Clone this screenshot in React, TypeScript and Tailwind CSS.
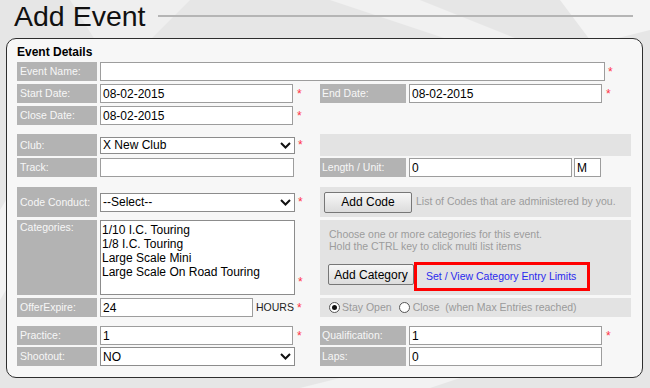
import clsx from 'clsx';
import type { ReactNode } from 'react';

function FieldLabel({ text, right, top }: { text: string; right?: boolean; top?: boolean }) {
    return (
        <div
            className={clsx(
                'flex shrink-0 self-stretch bg-[#b3b3b3] text-[10.5px] leading-[13px] text-[#f7f7f7]',
                right ? 'w-[86px] pl-[2px]' : 'w-[80px] pl-[3px]',
                top ? 'items-start pt-[1px]' : 'items-center'
            )}
        >
            {text}
        </div>
    );
}

function TextBox({ value, className }: { value?: string; className: string }) {
    return (
        <div
            className={clsx(
                'flex h-[19px] shrink-0 items-center border border-[#9d9d9d] bg-white px-[2px] text-[12px] text-black',
                className
            )}
        >
            {value}
        </div>
    );
}

function SelectBox({ value, className }: { value: string; className: string }) {
    return (
        <div
            className={clsx(
                'flex shrink-0 items-center justify-between border border-[#8c8c8c] bg-white pl-[2px] pr-[3px] text-[12px] text-black',
                className
            )}
        >
            <span>{value}</span>
            <svg width="11" height="7" viewBox="0 0 11 7" fill="none">
                <polyline points="1,1 5.5,5.5 10,1" stroke="#111" strokeWidth="2" />
            </svg>
        </div>
    );
}

function Req({ className }: { className?: string }) {
    return <span className={clsx('ml-[3px] text-[12px] leading-none text-[#ff3347]', className)}>*</span>;
}

function Button({ children, className }: { children: ReactNode; className: string }) {
    return (
        <div
            className={clsx(
                'flex shrink-0 items-center justify-center rounded-[2px] border border-[#777] bg-linear-to-b from-[#f7f7f7] to-[#dcdcdc] text-[12px] text-black',
                className
            )}
        >
            {children}
        </div>
    );
}

function Radio({ checked }: { checked?: boolean }) {
    return (
        <span className="flex h-[11px] w-[11px] items-center justify-center rounded-full border border-[#555] bg-white">
            {checked && <span className="h-[5px] w-[5px] rounded-full bg-[#111]" />}
        </span>
    );
}

export default function App() {
    return (
        <div className="relative h-[388px] w-[650px] overflow-hidden bg-[#e6e6e6] font-['Liberation_Sans',Arial,sans-serif]">
            {/* faint chequered-flag backdrop */}
            <svg className="absolute inset-0" width="650" height="388" viewBox="0 0 650 388">
                <polygon points="70,0 190,0 150,40 95,40" fill="#efefef" />
                <polygon points="330,0 420,0 520,40 450,40" fill="#f1f1f1" />
                <polygon points="560,0 650,0 650,30 610,40 590,40" fill="#f4f4f4" />
                <polygon points="0,210 6,200 6,290 0,300" fill="#f2f2f2" />
                <polygon points="300,388 340,378 460,378 430,388" fill="#f2f2f2" />
            </svg>

            <div className="relative flex h-[38px] items-start">
                <div className="flex h-[32px] w-full items-center">
                    <h1 className="pl-[14px] text-[28.5px] leading-[32px] text-[#111]">Add Event</h1>
                    <div className="ml-[12px] mr-[17px] h-[2px] flex-1 bg-[#b5b5b5]" />
                </div>
            </div>

            <div className="relative ml-[6px] flex w-[637px] flex-col rounded-[10px] border border-[#2e2e2e] bg-[#f7f7f7] pb-[11px] pl-[10px] pt-[6px]">
                <div className="text-[12px] font-bold leading-[14px] text-black">Event Details</div>

                <div className="mt-[3px] flex h-[19px] items-center">
                    <FieldLabel text="Event Name:" />
                    <TextBox className="ml-[3px] w-[505px]" />
                    <Req />
                </div>

                <div className="mt-[3px] flex h-[19px]">
                    <div className="flex w-[303px] items-center">
                        <FieldLabel text="Start Date:" />
                        <TextBox value="08-02-2015" className="ml-[3px] w-[193px]" />
                        <Req className="ml-[4px]" />
                    </div>
                    <div className="flex w-[311px] items-center">
                        <FieldLabel text="End Date:" right />
                        <TextBox value="08-02-2015" className="ml-[3px] w-[193px]" />
                        <Req className="ml-[4px]" />
                    </div>
                </div>

                <div className="mt-[3px] flex h-[19px]">
                    <div className="flex w-[303px] items-center">
                        <FieldLabel text="Close Date:" />
                        <TextBox value="08-02-2015" className="ml-[3px] w-[193px]" />
                        <Req className="ml-[4px]" />
                    </div>
                </div>

                <div className="mt-[9px] flex h-[22px]">
                    <div className="flex w-[303px] items-center">
                        <FieldLabel text="Club:" />
                        <SelectBox value="X New Club" className="ml-[3px] h-[17px] w-[195px]" />
                        <Req />
                    </div>
                    <div className="w-[311px] bg-[#e3e3e3]" />
                </div>

                <div className="mt-[2px] flex h-[19px]">
                    <div className="flex w-[303px] items-center">
                        <FieldLabel text="Track:" />
                        <TextBox className="ml-[3px] w-[194px]" />
                    </div>
                    <div className="flex w-[311px] items-center">
                        <FieldLabel text="Length / Unit:" right />
                        <TextBox value="0" className="ml-[3px] w-[163px]" />
                        <TextBox value="M" className="ml-[2px] w-[27px]" />
                    </div>
                </div>

                <div className="mt-[10px] flex h-[30px]">
                    <div className="flex w-[303px] items-center">
                        <FieldLabel text="Code Conduct:" />
                        <SelectBox value="--Select--" className="ml-[3px] h-[19px] w-[195px]" />
                        <Req />
                    </div>
                    <div className="flex w-[311px] items-center bg-[#e3e3e3] pl-[4px]">
                        <Button className="h-[21px] w-[88px]">Add Code</Button>
                        <span className="ml-[4px] text-[10.5px] text-[#9c9c9c]">List of Codes that are administered by you.</span>
                    </div>
                </div>

                <div className="mt-[3px] flex h-[75px]">
                    <div className="flex w-[303px]">
                        <FieldLabel text="Categories:" top />
                        <div className="ml-[3px] flex w-[195px] shrink-0 flex-col border border-[#8c8c8c] bg-white px-[1px] pt-[2px] text-[12px] leading-[14px] text-black">
                            <span>1/10 I.C. Touring</span>
                            <span>1/8 I.C. Touring</span>
                            <span>Large Scale Mini</span>
                            <span>Large Scale On Road Touring</span>
                        </div>
                        <Req className="mb-[7px] self-end" />
                    </div>
                    <div className="flex w-[311px] flex-col bg-[#e3e3e3] pl-[8px] pt-[8px]">
                        <div className="pl-[1px] text-[10.5px] leading-[12px] text-[#9c9c9c]">
                            <div>Choose one or more categories for this event.</div>
                            <div>Hold the CTRL key to click multi list items</div>
                        </div>
                        <div className="mt-[10px] flex items-start">
                            <Button className="mt-[2px] h-[21px] w-[86px]">Add Category</Button>
                            <div className="flex h-[29px] w-[176px] items-center border-[3px] border-[#f00] pl-[9px] text-[10.5px] text-[#2a2aee]">
                                Set / View Category Entry Limits
                            </div>
                        </div>
                    </div>
                </div>

                <div className="mt-[3px] flex h-[19px]">
                    <div className="flex w-[303px] items-center">
                        <FieldLabel text="OfferExpire:" />
                        <TextBox value="24" className="ml-[3px] w-[153px]" />
                        <span className="ml-[3px] text-[10.5px] text-[#222]">HOURS</span>
                        <Req className="ml-[2px]" />
                    </div>
                    <div className="flex w-[311px] items-center bg-[#e3e3e3] pl-[9px] text-[10.5px] text-[#9a9a9a]">
                        <Radio checked />
                        <span className="ml-[2px]">Stay Open</span>
                        <span className="ml-[7px]">
                            <Radio />
                        </span>
                        <span className="ml-[3px] whitespace-pre">Close  (when Max Entries reached)</span>
                    </div>
                </div>

                <div className="mt-[9px] flex h-[19px]">
                    <div className="flex w-[303px] items-center">
                        <FieldLabel text="Practice:" />
                        <TextBox value="1" className="ml-[3px] w-[193px]" />
                        <Req className="ml-[4px]" />
                    </div>
                    <div className="flex w-[311px] items-center">
                        <FieldLabel text="Qualification:" right />
                        <TextBox value="1" className="ml-[3px] w-[193px]" />
                        <Req className="ml-[4px]" />
                    </div>
                </div>

                <div className="mt-[2px] flex h-[19px]">
                    <div className="flex w-[303px] items-center">
                        <FieldLabel text="Shootout:" />
                        <SelectBox value="NO" className="ml-[3px] h-[19px] w-[195px]" />
                    </div>
                    <div className="flex w-[311px] items-center">
                        <FieldLabel text="Laps:" right />
                        <TextBox value="0" className="ml-[3px] w-[193px]" />
                    </div>
                </div>
            </div>
        </div>
    );
}
